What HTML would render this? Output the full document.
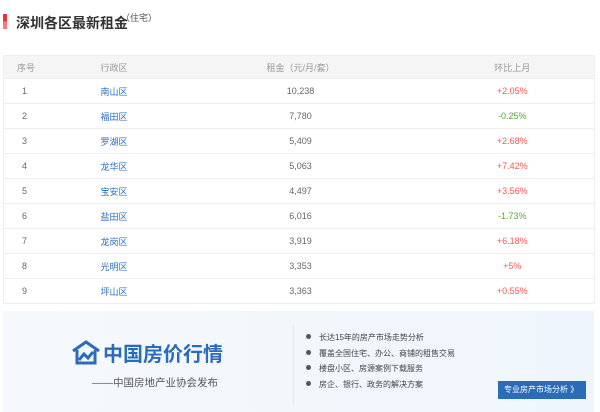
<!DOCTYPE html><html><head><meta charset="utf-8"><style>
*{margin:0;padding:0;box-sizing:border-box}
body{width:600px;height:412px;background:#fff;font-family:"Liberation Sans","Noto Sans CJK SC",sans-serif;position:relative;overflow:hidden}
.bar{position:absolute;left:3px;top:14px;width:4px;height:15px;background:linear-gradient(#e33 50%,#f77 50%)}
.title{position:absolute;left:16px;top:13px;font-size:14px;font-weight:bold;color:#333}
.sub{position:absolute;left:121px;top:11px;font-size:9px;color:#555}
table{position:absolute;left:3px;top:55px;width:591px;border-collapse:collapse;border:1px solid #eee;font-size:9px;color:#666;table-layout:fixed}
th{background:#f5f5f5;height:23px;font-weight:normal;color:#999;text-align:left}
td{height:25px;border-top:1px solid #eee}
.c1{width:97px;padding-left:13px}
td.c1{padding-left:18px}
.c2{width:70px}
.c3{text-align:center;width:260px}
.c4{text-align:center;width:164px}
a{color:#2a6fc0;text-decoration:none}
.r{color:#f55}.g{color:#5a3}
.ban{position:absolute;left:3px;top:311px;width:591px;height:101px;background:linear-gradient(90deg,#f6f9fc,#eef5fc)}
.logo{position:absolute;left:71px;top:338px;font-size:20px;font-weight:bold;color:#2a6cb8;display:flex;align-items:center}
.pub{position:absolute;left:92px;top:375px;font-size:10.5px;color:#555}
.div{position:absolute;left:293px;top:325px;width:1px;height:80px;background:#e3e8ee}
.ls{position:absolute;left:306px;top:330px;font-size:8px;color:#444;line-height:15.5px;list-style:none}
.ls li:before{content:"";display:inline-block;width:5px;height:5px;border-radius:50%;background:#555;margin-right:8px;vertical-align:1px}
.btn{position:absolute;left:498px;top:381px;width:88px;height:18px;background:#2a6cb8;color:#fff;font-size:8px;line-height:18px;padding-left:6px}
</style></head><body>
<div class="bar"></div><div class="title">深圳各区最新租金</div><div class="sub">（住宅）</div>
<table>
<tr><th class="c1">序号</th><th class="c2">行政区</th><th class="c3">租金（元/月/套）</th><th class="c4">环比上月</th></tr>
<tr><td class="c1">1</td><td><a>南山区</a></td><td class="c3">10,238</td><td class="c4 r">+2.05%</td></tr>
<tr><td class="c1">2</td><td><a>福田区</a></td><td class="c3">7,780</td><td class="c4 g">-0.25%</td></tr>
<tr><td class="c1">3</td><td><a>罗湖区</a></td><td class="c3">5,409</td><td class="c4 r">+2.68%</td></tr>
<tr><td class="c1">4</td><td><a>龙华区</a></td><td class="c3">5,063</td><td class="c4 r">+7.42%</td></tr>
<tr><td class="c1">5</td><td><a>宝安区</a></td><td class="c3">4,497</td><td class="c4 r">+3.56%</td></tr>
<tr><td class="c1">6</td><td><a>盐田区</a></td><td class="c3">6,016</td><td class="c4 g">-1.73%</td></tr>
<tr><td class="c1">7</td><td><a>龙岗区</a></td><td class="c3">3,919</td><td class="c4 r">+6.18%</td></tr>
<tr><td class="c1">8</td><td><a>光明区</a></td><td class="c3">3,353</td><td class="c4 r">+5%</td></tr>
<tr><td class="c1">9</td><td><a>坪山区</a></td><td class="c3">3,363</td><td class="c4 r">+0.55%</td></tr>
</table>
<div class="ban"></div>
<div class="logo"><svg width="30" height="26" viewBox="0 0 30 26" fill="none" stroke="#2a6cb8" stroke-width="3"><path d="M2 11 L15 2 L28 11"/><path d="M6 10 V23 H24 V10"/><path d="M8 20 L13 14 L17 18 L22 12"/></svg><span style="margin-left:2px">中国房价行情</span></div>
<div class="pub">——中国房地产业协会发布</div>
<div class="div"></div>
<ul class="ls"><li>长达15年的房产市场走势分析</li><li>覆盖全国住宅、办公、商铺的租售交易</li><li>楼盘小区、房源案例下载服务</li><li>房企、银行、政务的解决方案</li></ul>
<div class="btn">专业房产市场分析 》</div>
</body></html>
